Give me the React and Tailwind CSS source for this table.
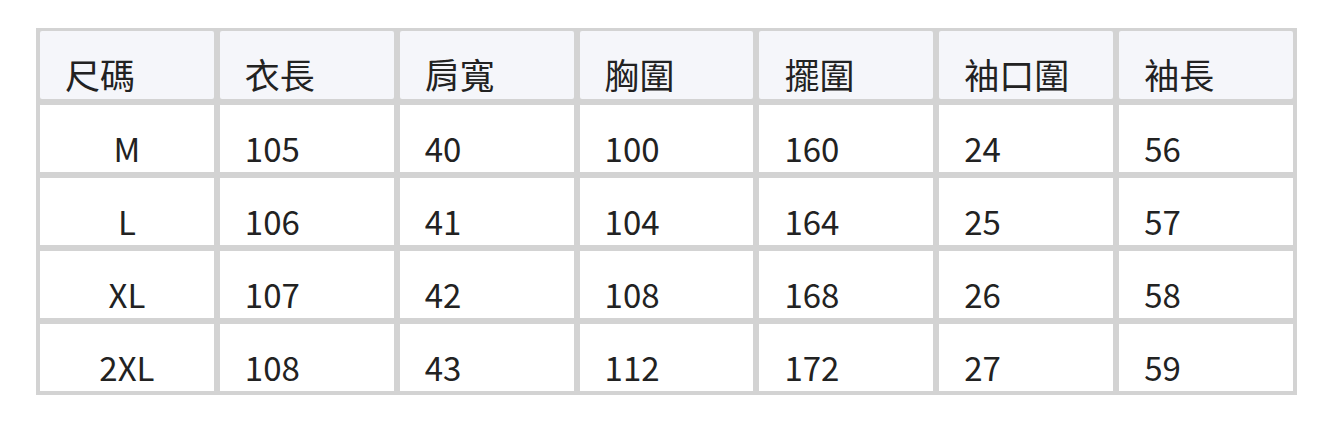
const HEADERS = ['尺碼', '衣長', '肩寬', '胸圍', '擺圍', '袖口圍', '袖長'];

const ROWS = [
  ['M', '105', '40', '100', '160', '24', '56'],
  ['L', '106', '41', '104', '164', '25', '57'],
  ['XL', '107', '42', '108', '168', '26', '58'],
  ['2XL', '108', '43', '112', '172', '27', '59'],
];

const FONT = { fontFamily: '"Noto Sans CJK TC", "Noto Sans", sans-serif' };

export default function App() {
  return (
    <div className="w-[1332px] h-[422px] bg-white pt-[28px] pl-[36px]" style={FONT}>
      <div className="w-[1261px] bg-[#d3d3d3] pt-[3px] px-[4px] pb-[4px] flex flex-col gap-[6px] text-[#222222]">
        <div className="grid grid-cols-7 gap-[6px]">
          {HEADERS.map((h) => (
            <div
              key={h}
              className="h-[68px] bg-[#f5f6fa] rounded-[2px] flex items-end pl-[25px] pb-[3px] text-[35px] leading-[44px]"
            >
              {h}
            </div>
          ))}
        </div>
        {ROWS.map((row) => (
          <div key={row[0]} className="grid grid-cols-7 gap-[6px]">
            {row.map((cell, i) => (
              <div
                key={i}
                className={`h-[67px] bg-white flex items-end pb-[2px] text-[33px] leading-[44px] ${
                  i === 0 ? 'justify-center' : 'pl-[25px]'
                }`}
              >
                {cell}
              </div>
            ))}
          </div>
        ))}
      </div>
    </div>
  );
}
